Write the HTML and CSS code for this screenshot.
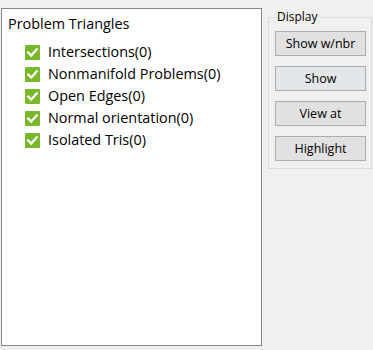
FILE: index.html
```html
<!DOCTYPE html>
<html>
<head>
<meta charset="utf-8">
<link rel="stylesheet" href="styles.css">
</head>
<body>
<div class="window">
  <div class="tree">
    <div class="tree-title">Problem Triangles</div>
    <ul class="items">
      <li class="item"><span class="check"><svg viewBox="0 0 15 15" width="15" height="15"><path d="M3.2 7.6 L6.2 10.6 L11.8 4.4" fill="none" stroke="#fff" stroke-width="2.2" stroke-linecap="square"/></svg></span>Intersections(0)</li>
      <li class="item"><span class="check"><svg viewBox="0 0 15 15" width="15" height="15"><path d="M3.2 7.6 L6.2 10.6 L11.8 4.4" fill="none" stroke="#fff" stroke-width="2.2" stroke-linecap="square"/></svg></span>Nonmanifold Problems(0)</li>
      <li class="item"><span class="check"><svg viewBox="0 0 15 15" width="15" height="15"><path d="M3.2 7.6 L6.2 10.6 L11.8 4.4" fill="none" stroke="#fff" stroke-width="2.2" stroke-linecap="square"/></svg></span>Open Edges(0)</li>
      <li class="item"><span class="check"><svg viewBox="0 0 15 15" width="15" height="15"><path d="M3.2 7.6 L6.2 10.6 L11.8 4.4" fill="none" stroke="#fff" stroke-width="2.2" stroke-linecap="square"/></svg></span>Normal orientation(0)</li>
      <li class="item"><span class="check"><svg viewBox="0 0 15 15" width="15" height="15"><path d="M3.2 7.6 L6.2 10.6 L11.8 4.4" fill="none" stroke="#fff" stroke-width="2.2" stroke-linecap="square"/></svg></span>Isolated Tris(0)</li>
    </ul>
  </div>
  <fieldset class="group">
    <legend class="group-label">Display</legend>
    <button class="btn">Show w/nbr</button>
    <button class="btn btn-focus">Show</button>
    <button class="btn">View at</button>
    <button class="btn">Highlight</button>
  </fieldset>
</div>
</body>
</html>
```
FILE: styles.css
```css
html, body {
  margin: 0;
  padding: 0;
  background: #f0f0f0;
  font-family: "Open Sans", "Noto Sans", sans-serif;
  color: #000;
}
.window {
  display: flex;
  align-items: flex-start;
  padding: 8px 0 0 1px;
}
.tree {
  box-sizing: border-box;
  width: 261px;
  height: 338px;
  background: #fff;
  border: 1px solid #828790;
  padding: 5px 0 0 6px;
}
.tree-title {
  font-size: 14.4px;
  line-height: 20px;
  height: 20px;
}
.items {
  list-style: none;
  margin: 7px 0 0 17px;
  padding: 0;
}
.item {
  display: flex;
  align-items: center;
  height: 22px;
  font-size: 14.4px;
  line-height: 22px;
}
.check {
  display: block;
  width: 15px;
  height: 15px;
  background: #79b82b;
  margin-right: 8px;
  border-radius: 1px;
}
.check svg {
  display: block;
}
.group {
  box-sizing: border-box;
  margin: 2px 0 0 6px;
  width: 104px;
  height: 159px;
  border: 1px solid #dcdcdc;
  padding: 7px 0 0 6px;
  display: flex;
  flex-direction: column;
  gap: 10px;
}
.group-label {
  font-size: 12px;
  padding: 0 2px 0 1px;
  margin-left: 1px;
  line-height: 14px;
}
.btn {
  box-sizing: border-box;
  width: 91px;
  height: 25px;
  background: #e1e1e1;
  border: 1px solid #adadad;
  font-family: "Open Sans", "Noto Sans", sans-serif;
  font-size: 12.5px;
  color: #000;
  padding: 0;
  margin: 0;
}
.btn-focus {
  background: #e3e7ea;
}
```
